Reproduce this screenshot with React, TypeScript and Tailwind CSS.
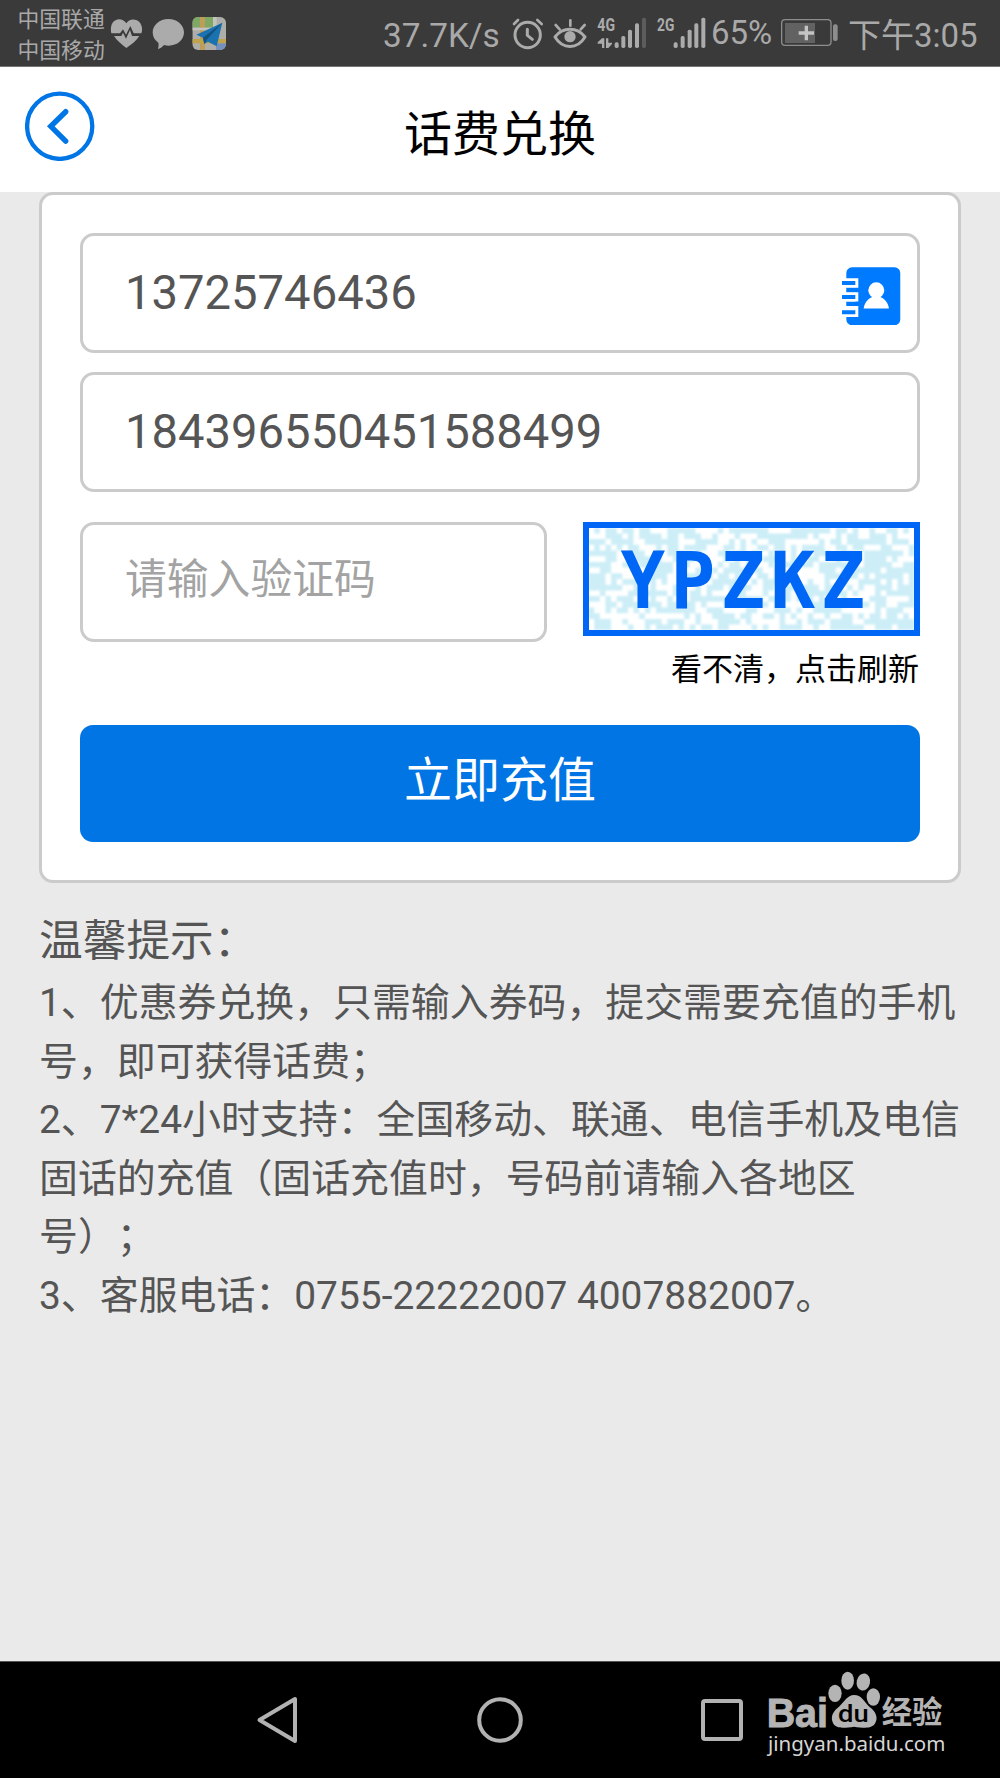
import type { ReactNode } from "react";

const TIPS = [
  "1、优惠券兑换，只需输入券码，提交需要充值的手机",
  "号，即可获得话费；",
  "2、7*24小时支持：全国移动、联通、电信手机及电信",
  "固话的充值（固话充值时，号码前请输入各地区",
  "号）；",
  "3、客服电话：0755-22222007 4007882007。",
];

const COLS = 60;
const ROWS = 20;

// speckle behind the captcha letters, seeded so it never flickers
function buildNoise() {
  let seed = 20177;
  const next = () => {
    seed = (seed * 1103515245 + 12345) % 2147483648;
    return seed / 2147483648;
  };
  let d = "";
  for (let y = 1; y < ROWS - 1; y++) {
    for (let x = 1; x < COLS - 1; x++) {
      if (next() > 0.42) d += `M${x} ${y}h1v1h-1z`;
    }
  }
  return d;
}

const NOISE = buildNoise();

function StatusIcon({ x, w, className, children }: { x: number; w: number; className: string; children: ReactNode }) {
  return (
    <svg viewBox={`${x} 0 ${w} 198`} className={`h-[66px] shrink-0 ${className}`} fill="#ababab">
      {children}
    </svg>
  );
}

function StatusBar() {
  return (
    <div className="flex h-[67px] items-start border-b border-[#757575] bg-[#3a3a3a] text-[33px] leading-[66px] whitespace-nowrap text-[#a9a9a9]">
      <div className="mt-[4px] ml-[17.5px] w-[92.5px] shrink-0 text-[21.8px] leading-[31px]">
        <div>中国联通</div>
        <div>中国移动</div>
      </div>
      <StatusIcon x={330} w={99} className="w-[33px]">
        <path d="M379 144 C365 133 350 122 342 108 H364 L369 98 L378 116 L390 90 L396 108 H418 C410 122 394 134 379 144Z" />
        <path d="M334 100 C330 84 334 60 356 58 C367 58 375 63 379 70 C384 62 392 58 403 59 C424 61 430 84 424 100 H401 L391 78 L378 104 L369 88 L360 100Z" />
      </StatusIcon>
      <StatusIcon x={456} w={99} className="ml-[9px] w-[33px]">
        <path d="M505 57 C532 57 552 75 552 97 C552 120 532 137 506 137 C501 137 496 136 492 135 C486 142 480 146 474 147 C475 141 477 135 475 128 C464 121 458 110 458 97 C458 75 479 57 505 57Z" />
      </StatusIcon>
      <StatusIcon x={576} w={102} className="ml-[7px] w-[34px]">
        <clipPath id="map">
          <rect x="577" y="51" width="101" height="99" rx="17" />
        </clipPath>
        <g clipPath="url(#map)">
          <rect x="577" y="51" width="101" height="99" fill="#aeada8" />
          <rect x="577" y="51" width="62" height="32" fill="#7fa864" />
          <rect x="600" y="51" width="15" height="99" fill="#bd9d58" />
          <rect x="577" y="117" width="101" height="13" fill="#bfa44c" />
          <rect x="639" y="51" width="11" height="66" fill="#c2c2bf" />
          <rect x="577" y="83" width="72" height="8" fill="#c2c2bf" />
          <rect x="648" y="130" width="30" height="20" fill="#7790bb" />
        </g>
        <path d="M667 68 L589 104 L609 113 L613 132 L624 125 L650 139Z" fill="#1b72b0" />
        <path d="M667 68 L609 113 L613 132 L620 119Z" fill="#12527f" />
      </StatusIcon>
      <div className="mt-[3px] ml-[157px] w-[129px] shrink-0 text-[33.3px]">37.7K/s</div>
      <StatusIcon x={425} w={96} className="w-[32px]">
        <g fill="none" stroke="#ababab" strokeWidth="8" strokeLinecap="round">
          <circle cx="472" cy="105" r="38" strokeWidth="9" />
          <path d="M471 88V106L486 118" strokeWidth="9" />
          <path d="M431 72L443 60M501 60L514 72" />
        </g>
      </StatusIcon>
      <StatusIcon x={550} w={102} className="ml-[9px] w-[34px]">
        <g fill="none" stroke="#ababab" strokeWidth="9" strokeLinecap="round">
          <path d="M556 111C579 80 623 80 646 111C623 149 579 149 556 111Z" strokeLinejoin="round" />
          <path d="M602 61V77M558 75L570 88M645 75L633 88" strokeWidth="8" />
        </g>
        <circle cx="601" cy="110" r="17" />
      </StatusIcon>
      <StatusIcon x={682} w={150} className="ml-[10px] w-[50px]">
        <text x="683" y="94" fontSize="55" fontWeight="700" fontFamily="Roboto" textLength="53" lengthAdjust="spacingAndGlyphs">4G</text>
        <path d="M697 115V144H704V115H697L684 127V131H697ZM709 115V144H716L727 132V128H716V115Z" />
        <rect x="735" y="127" width="12" height="17" rx="5" />
        <rect x="755" y="108" width="12" height="36" rx="5" />
        <rect x="775" y="89" width="12" height="55" rx="5" />
        <rect x="796" y="70" width="12" height="74" rx="5" />
        <rect x="817" y="53" width="12" height="91" rx="5" fill="#5c5c5c" />
      </StatusIcon>
      <StatusIcon x={-38} w={147} className="ml-[10px] w-[49px]">
        <text x="-38" y="94" fontSize="55" fontWeight="700" fontFamily="Roboto" textLength="52" lengthAdjust="spacingAndGlyphs">2G</text>
        <rect x="12" y="127" width="12" height="17" rx="5" />
        <rect x="33" y="108" width="12" height="36" rx="5" />
        <rect x="54" y="89" width="12" height="55" rx="5" />
        <rect x="74" y="70" width="12" height="74" rx="5" />
        <rect x="95" y="53" width="12" height="91" rx="5" />
      </StatusIcon>
      <div className="ml-[5px] w-[70px] shrink-0">65%</div>
      <StatusIcon x={333} w={174} className="w-[58px]">
        <rect x="335" y="59" width="148" height="77" rx="10" fill="none" stroke="#8d8d8d" strokeWidth="4" />
        <rect x="345" y="69" width="90" height="60" fill="#626262" />
        <path d="M404 77H414V94H432V104H414V121H404V104H386V94H404Z" fill="#c4c4c4" />
        <rect x="489" y="73" width="14" height="50" rx="6" fill="#8d8d8d" />
      </StatusIcon>
      <div className="mt-[3px] ml-[9px] shrink-0">下午3:05</div>
    </div>
  );
}

function Header() {
  return (
    <div className="grid h-[125px] grid-cols-3 items-center bg-white">
      <svg viewBox="0 0 70 70" className="mb-[7px] ml-[25px] w-[70px]" fill="none" stroke="#0075e6">
        <circle cx="34.700" cy="35.300" r="32.600" strokeWidth="4.300" />
        <path d="M40.7 20.7L25.8 35.3L40.7 50.2" strokeWidth="5.4" strokeLinecap="round" />
      </svg>
      <h1 className="pt-[10px] text-center text-[48px] leading-[60px] text-black">话费兑换</h1>
    </div>
  );
}

function Field({ className = "", children }: { className?: string; children: ReactNode }) {
  return (
    <div className={`flex h-[120px] items-center rounded-[14px] border-3 border-[#cbcbcb] bg-white pl-[42px] ${className}`}>
      {children}
    </div>
  );
}

function ContactsIcon() {
  return (
    <svg viewBox="0 0 176 176" className="mt-[6px] mr-[16px] ml-auto w-[58.6px]">
      <rect x="13" y="1" width="162" height="174" rx="17" fill="#007aff" />
      <path d="M0 34H49V62H0ZM0 76H49V104H0ZM0 117H49V150H0Z" fill="#fff" />
      <path d="M13 62V76H41V62ZM13 104V117H41V104Z" fill="#fff" />
      <path d="M0 42H40V54H0ZM0 84H40V96H0ZM0 130H40V142H0ZM13 63H44V75H13ZM13 105H44V117H13Z" fill="#007aff" />
      <circle cx="103" cy="70" r="24" fill="#fff" />
      <path d="M65 125C67 108 77 96 91 90H115C129 96 139 108 141 125Z" fill="#fff" />
    </svg>
  );
}

function Captcha() {
  return (
    <div className="flex flex-col items-end">
      <svg viewBox="0 0 337 114" className="h-[114px] w-[337px]">
        <rect width="337" height="114" fill="#fff" />
        <path d={NOISE} transform="scale(5.617 5.7)" fill="#cdeef7" className="blur-[0.2px]" />
        <rect x="3" y="3" width="331" height="108" fill="none" stroke="#0066f5" strokeWidth="6" />
        <text
          x="40"
          y="86"
          transform="scale(0.94 1)"
          fontFamily="DejaVu Sans Mono"
          fontWeight="700"
          fontSize="79"
          letterSpacing="5.6"
          fill="#0066f5"
        >
          YPZKZ
        </text>
      </svg>
      <div className="mt-[14px] mr-px text-[31px] leading-[40px] text-black">看不清，点击刷新</div>
    </div>
  );
}

function NavBar() {
  return (
    <div className="relative flex h-[117px] items-center border-t border-[#555] bg-black">
      <svg viewBox="0 0 44 50" className="ml-[255px] w-[44px]" fill="none" stroke="#b2b2b2" strokeWidth="4" strokeLinejoin="round">
        <path d="M40 4V46L4.500 25Z" />
      </svg>
      <svg viewBox="0 0 46 46" className="ml-[178px] w-[46px]" fill="none" stroke="#b2b2b2" strokeWidth="4">
        <circle cx="23" cy="23" r="20.800" />
      </svg>
      <svg viewBox="0 0 42 42" className="ml-[178px] w-[42px]" fill="none" stroke="#b2b2b2" strokeWidth="4">
        <rect x="2" y="2" width="38" height="38" rx="2" />
      </svg>
      <svg viewBox="300 45 570 285" className="absolute top-[3px] left-[760px] w-[190px]" fill="#b4b4b4">
        <text x="320" y="230" fontFamily="Liberation Sans" fontWeight="700" fontSize="122" textLength="184" lengthAdjust="spacingAndGlyphs" stroke="#b4b4b4" strokeWidth="3">
          Bai
        </text>
        <ellipse cx="525" cy="130" rx="20" ry="26" />
        <ellipse cx="563" cy="92" rx="19" ry="27" />
        <ellipse cx="610" cy="96" rx="20" ry="26" transform="rotate(12 610 96)" />
        <ellipse cx="640" cy="141" rx="20" ry="26" />
        <path d="M582 135C605 135 612 155 628 170C650 186 652 203 648 214C640 239 612 234 582 230C552 234 524 239 517 214C512 195 522 182 537 170C553 156 562 135 582 135Z" />
        <text x="534" y="217" fontFamily="Roboto" fontWeight="500" fontSize="70" textLength="92" lengthAdjust="spacingAndGlyphs" fill="#000">
          du
        </text>
        <text x="665" y="220" fontFamily="Noto Sans CJK SC" fontWeight="700" fontSize="92" textLength="182" lengthAdjust="spacingAndGlyphs">
          经验
        </text>
        <text x="324" y="302" fontFamily="Noto Sans" fontSize="62" textLength="532" lengthAdjust="spacingAndGlyphs" fill="#d6d6d6">
          jingyan.baidu.com
        </text>
      </svg>
    </div>
  );
}

export default function App() {
  return (
    <div className="flex h-[1778px] w-[1000px] flex-col overflow-hidden bg-[#eaeaea] font-[Roboto,'Noto_Sans_CJK_SC',sans-serif] [text-spacing-trim:space-all]">
      <StatusBar />
      <Header />
      <main className="flex-1">
        <div className="mx-[39px] h-[691px] rounded-[14px] border-3 border-[#cbcbcb] bg-white p-[38px]">
          <Field>
            <span className="text-[47.2px] leading-[60px] text-[#555]">13725746436</span>
            <ContactsIcon />
          </Field>
          <Field className="mt-[19px]">
            <span className="pb-px text-[47.2px] leading-[60px] text-[#555]">184396550451588499</span>
          </Field>
          <div className="mt-[30px] flex h-[203px] justify-between">
            <Field className="w-[467px]">
              <span className="pb-[4px] text-[41.8px] leading-[60px] text-[#a3a3a3]">请输入验证码</span>
            </Field>
            <Captcha />
          </div>
          <button className="flex h-[117px] w-full items-center justify-center rounded-[13px] bg-[#0075e3] pb-[5px] text-[48px] leading-[60px] text-white">
            立即充值
          </button>
        </div>
        <div className="mt-[25px] ml-[39px] whitespace-nowrap text-[#555]">
          <h2 className="text-[43.7px] leading-[66px]">温馨提示：</h2>
          <div className="text-[38.9px] leading-[58.5px]">
            {TIPS.map((line) => (
              <div key={line}>{line}</div>
            ))}
          </div>
        </div>
      </main>
      <NavBar />
    </div>
  );
}
